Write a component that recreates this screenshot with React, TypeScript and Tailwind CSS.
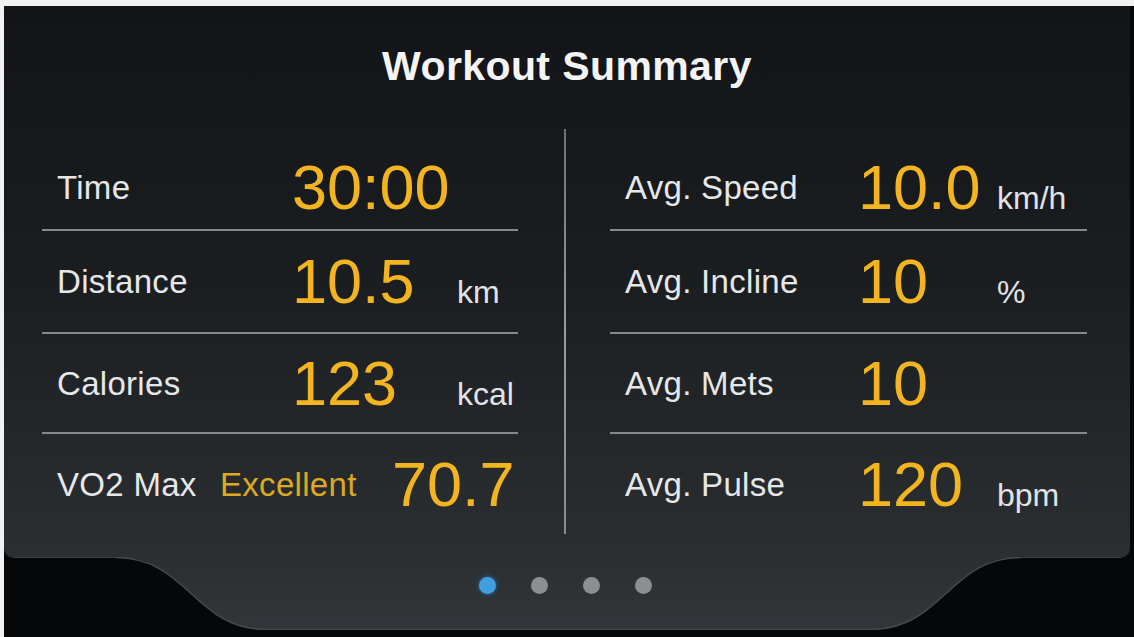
import React from "react";

type Stat = {
  label: string;
  value: string;
  unit?: string;
};

const leftStats: Stat[] = [
  { label: "Time", value: "30:00" },
  { label: "Distance", value: "10.5", unit: "km" },
  { label: "Calories", value: "123", unit: "kcal" },
];

const rightStats: Stat[] = [
  { label: "Avg. Speed", value: "10.0", unit: "km/h" },
  { label: "Avg. Incline", value: "10", unit: "%" },
  { label: "Avg. Mets", value: "10" },
  { label: "Avg. Pulse", value: "120", unit: "bpm" },
];

// row heights: first row is shorter because the column has top padding
const rowHeights = ["h-[86px]", "h-[103px]", "h-[100px]", "h-[100px]"];

function Row({
  stat,
  index,
  labelW,
  valueW,
  last,
}: {
  stat: Stat;
  index: number;
  labelW: string;
  valueW: string;
  last?: boolean;
}) {
  return (
    <div
      className={`flex items-center pl-[15px] ${rowHeights[index]} ${
        last ? "" : "border-b-2 border-[#86888b]"
      }`}
    >
      <span className={`${labelW} shrink-0 text-[33px] leading-none tracking-[0.3px] text-[#e6e7e8]`}>
        {stat.label}
      </span>
      <div className="flex items-baseline">
        <span className={`${valueW} shrink-0 text-[63px] leading-none text-[#f2b51f]`}>
          {stat.value}
        </span>
        {stat.unit && (
          <span className="text-[32px] leading-none text-[#e2e3e4]">{stat.unit}</span>
        )}
      </div>
    </div>
  );
}

function Curve({ flip }: { flip?: boolean }) {
  const id = flip ? "tabFillR" : "tabFillL";
  return (
    <svg
      width="150"
      height="73"
      viewBox="0 0 150 73"
      className={`block shrink-0 ${flip ? "-scale-x-100" : ""}`}
    >
      <defs>
        <linearGradient id={id} x1="0" y1="0" x2="0" y2="1">
          <stop offset="0" stopColor="#2c2f32" />
          <stop offset="1" stopColor="#323539" />
        </linearGradient>
      </defs>
      <path d="M0 0 C72 0 78 73 150 73 L150 0 Z" fill={`url(#${id})`} />
      <path
        d="M0 0.6 C72 0.6 78 72.4 150 72.4"
        fill="none"
        stroke="#474a4e"
        strokeWidth="1.4"
      />
    </svg>
  );
}

export default function App() {
  return (
    <div className="w-[1134px] h-[637px] overflow-hidden bg-[#f1f1f1] pt-[6px] pl-[4px] flex flex-col font-['Liberation_Sans',Arial,sans-serif]">
      <div className="flex-1 flex flex-col bg-[#060709]">
        {/* main panel */}
        <div className="h-[551px] mr-[4px] rounded-b-[10px] flex flex-col bg-linear-to-b from-[#121417] via-[#1b1e21] to-[#2c2f32] shadow-[0_1px_0_#3c3f43]">
          <h1 className="mt-[40px] text-center text-[41px] leading-none font-bold tracking-[0.4px] text-[#f4f4f4]">
            Workout Summary
          </h1>

          <div className="mt-[42px] flex pl-[38px]">
            {/* left column */}
            <div className="w-[476px] pt-[16px] flex flex-col">
              {leftStats.map((s, i) => (
                <Row key={s.label} stat={s} index={i} labelW="w-[235px]" valueW="w-[165px]" />
              ))}
              <div className={`flex items-center pl-[15px] ${rowHeights[3]}`}>
                <span className="w-[163px] shrink-0 text-[33px] leading-none tracking-[0.3px] text-[#e6e7e8]">
                  VO2 Max
                </span>
                <span className="w-[172px] shrink-0 text-[33px] leading-none tracking-[0.3px] text-[#dcaa22]">
                  Excellent
                </span>
                <span className="text-[63px] leading-none text-[#f2b51f]">70.7</span>
              </div>
            </div>

            {/* centre divider */}
            <div className="ml-[46px] mr-[44px] w-[2px] self-stretch bg-linear-to-b from-[#6f7174] via-[#9a9c9f] to-[#8a8c8f]" />

            {/* right column */}
            <div className="w-[477px] pt-[16px] flex flex-col">
              {rightStats.map((s, i) => (
                <Row
                  key={s.label}
                  stat={s}
                  index={i}
                  labelW="w-[233px]"
                  valueW="w-[139px]"
                  last={i === rightStats.length - 1}
                />
              ))}
            </div>
          </div>
        </div>

        {/* bottom tab with page dots */}
        <div className="flex h-[73px]">
          <div className="w-[112px] shrink-0" />
          <Curve />
          <div className="flex-1 flex justify-center pt-[20px] pr-[6px] gap-[35px] bg-linear-to-b from-[#2c2f32] to-[#323539] border-b-[1.5px] border-[#474a4e]">
            <span className="w-[17px] h-[17px] rounded-full bg-[#3f9fe0] shadow-[0_0_4px_#2a6fa8]" />
            <span className="w-[17px] h-[17px] rounded-full bg-[#8d8e90]" />
            <span className="w-[17px] h-[17px] rounded-full bg-[#8d8e90]" />
            <span className="w-[17px] h-[17px] rounded-full bg-[#8d8e90]" />
          </div>
          <Curve flip />
          <div className="w-[113px] shrink-0" />
        </div>
      </div>
    </div>
  );
}
